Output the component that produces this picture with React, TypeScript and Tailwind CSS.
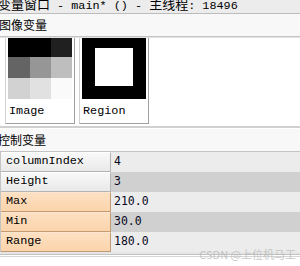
const cjk = "font-['Noto_Sans_CJK_SC',sans-serif]";
const mono = "font-['Liberation_Mono','Noto_Sans_CJK_SC',monospace]";
const valFont = "font-['DejaVu_Sans_Mono',monospace]";

const imageCells = [
  '#000000', '#000000', '#202020',
  '#646464', '#969696', '#bebebe',
  '#d2d2d2', '#e1e1e1', '#fafafa',
];

const rows = [
  { name: 'columnIndex', value: '4', hot: false },
  { name: 'Height', value: '3', hot: false },
  { name: 'Max', value: '210.0', hot: true },
  { name: 'Min', value: '30.0', hot: true },
  { name: 'Range', value: '180.0', hot: true },
];

function Thumb({ label, children }: { label: string; children: React.ReactNode }) {
  return (
    <div className="w-[70px] h-[89px] bg-white border-l border-l-[#d2d2d2] border-r border-b border-r-[#a0a0a0] border-b-[#a0a0a0] pl-[2px] flex flex-col">
      <div className="w-[64px] h-[64px]">{children}</div>
      <div className={`${mono} text-[11.8px] leading-[24px] text-black pl-[1px]`}>{label}</div>
    </div>
  );
}

function SectionHeader({ text, shift }: { text: string; shift: string }) {
  return (
    <div className={`h-[23px] bg-[#f8f8f8] border-b border-[#c4c4c4] flex items-center ${cjk} text-[12px] text-black`}>
      <span className={shift}>{text}</span>
    </div>
  );
}

export default function App() {
  return (
    <div className="relative w-[300px] h-[266px] overflow-hidden bg-white flex flex-col">
      {/* window title, scrolled up a bit */}
      <div className="h-[14px] shrink-0 bg-[#ececec] border-b border-[#bcbcbc] overflow-hidden">
        <div className="whitespace-pre leading-[13px] -translate-y-[3px] -ml-[2px] text-black">
          <span className={`${cjk} text-[13px]`}>变量窗口</span>
          <span className={`${mono} text-[11.8px]`}> - main* () - </span>
          <span className={`${cjk} text-[13px]`}>主线程</span>
          <span className={`${mono} text-[11.8px]`}>: 18496</span>
        </div>
      </div>

      <SectionHeader text="图像变量" shift="-ml-[1px]" />

      {/* image thumbnails */}
      <div className="h-[91px] shrink-0 border-t border-[#e2e2e2] border-b-2 border-b-[#d0d0d0] overflow-hidden">
        <div className="flex gap-[4px] pl-[5px] -mt-[3px]">
          <Thumb label="Image">
            <div className="grid grid-cols-[22px_21px_21px] grid-rows-[22px_21px_21px] w-[64px] h-[64px]">
              {imageCells.map((c, i) => (
                <div key={i} style={{ backgroundColor: c }} />
              ))}
            </div>
          </Thumb>
          <Thumb label="Region">
            <div className="w-[64px] h-[64px] bg-black p-[13px]">
              <div className="w-[38px] h-[38px] bg-white" />
            </div>
          </Thumb>
        </div>
      </div>

      <div className="h-[1px] shrink-0 bg-white" />
      <SectionHeader text="控制变量" shift="-ml-[2px]" />

      {/* control variables table */}
      <div className="shrink-0 border-l border-[#c4c4c4]">
        {rows.map((r, i) => (
          <div key={r.name} className="flex h-[20px]">
            <div
              className={`w-[110px] shrink-0 flex items-center pl-[5px] border-r border-b border-t ${mono} text-[11.8px] text-black ${
                r.hot
                  ? 'bg-[#fcd8b2] bg-gradient-to-b from-[#fde0c2] to-[#fbd4ab] border-r-[#c49a74] border-b-[#c49a74] border-t-[#fde6cf]'
                  : 'bg-gradient-to-b from-[#f9f9f9] to-[#e9e9e9] border-r-[#b4b4b4] border-b-[#b4b4b4] border-t-white'
              }`}
            >
              {r.name}
            </div>
            <div
              className={`flex-1 flex items-center pl-[3px] ${valFont} text-[11.5px] text-[#0a0a1e] ${
                i % 2 === 0 ? 'bg-[#ececec]' : 'bg-[#d0d0d0]'
              }`}
            >
              {r.value}
            </div>
          </div>
        ))}
      </div>

      <div className="h-[3px] shrink-0 bg-[#e6e6e6] border-b border-[#c2c2c2]" />
      <div className="h-[2px] shrink-0 bg-white border-b border-[#d4d4d4]" />
      <div className="flex-1 bg-white" />

      {/* watermark */}
      <div className={`absolute right-[4px] top-[247px] ${cjk} text-[11px] leading-[14px] text-[#b8b8b8]/80`}>
        CSDN @上位机马工
      </div>
    </div>
  );
}
